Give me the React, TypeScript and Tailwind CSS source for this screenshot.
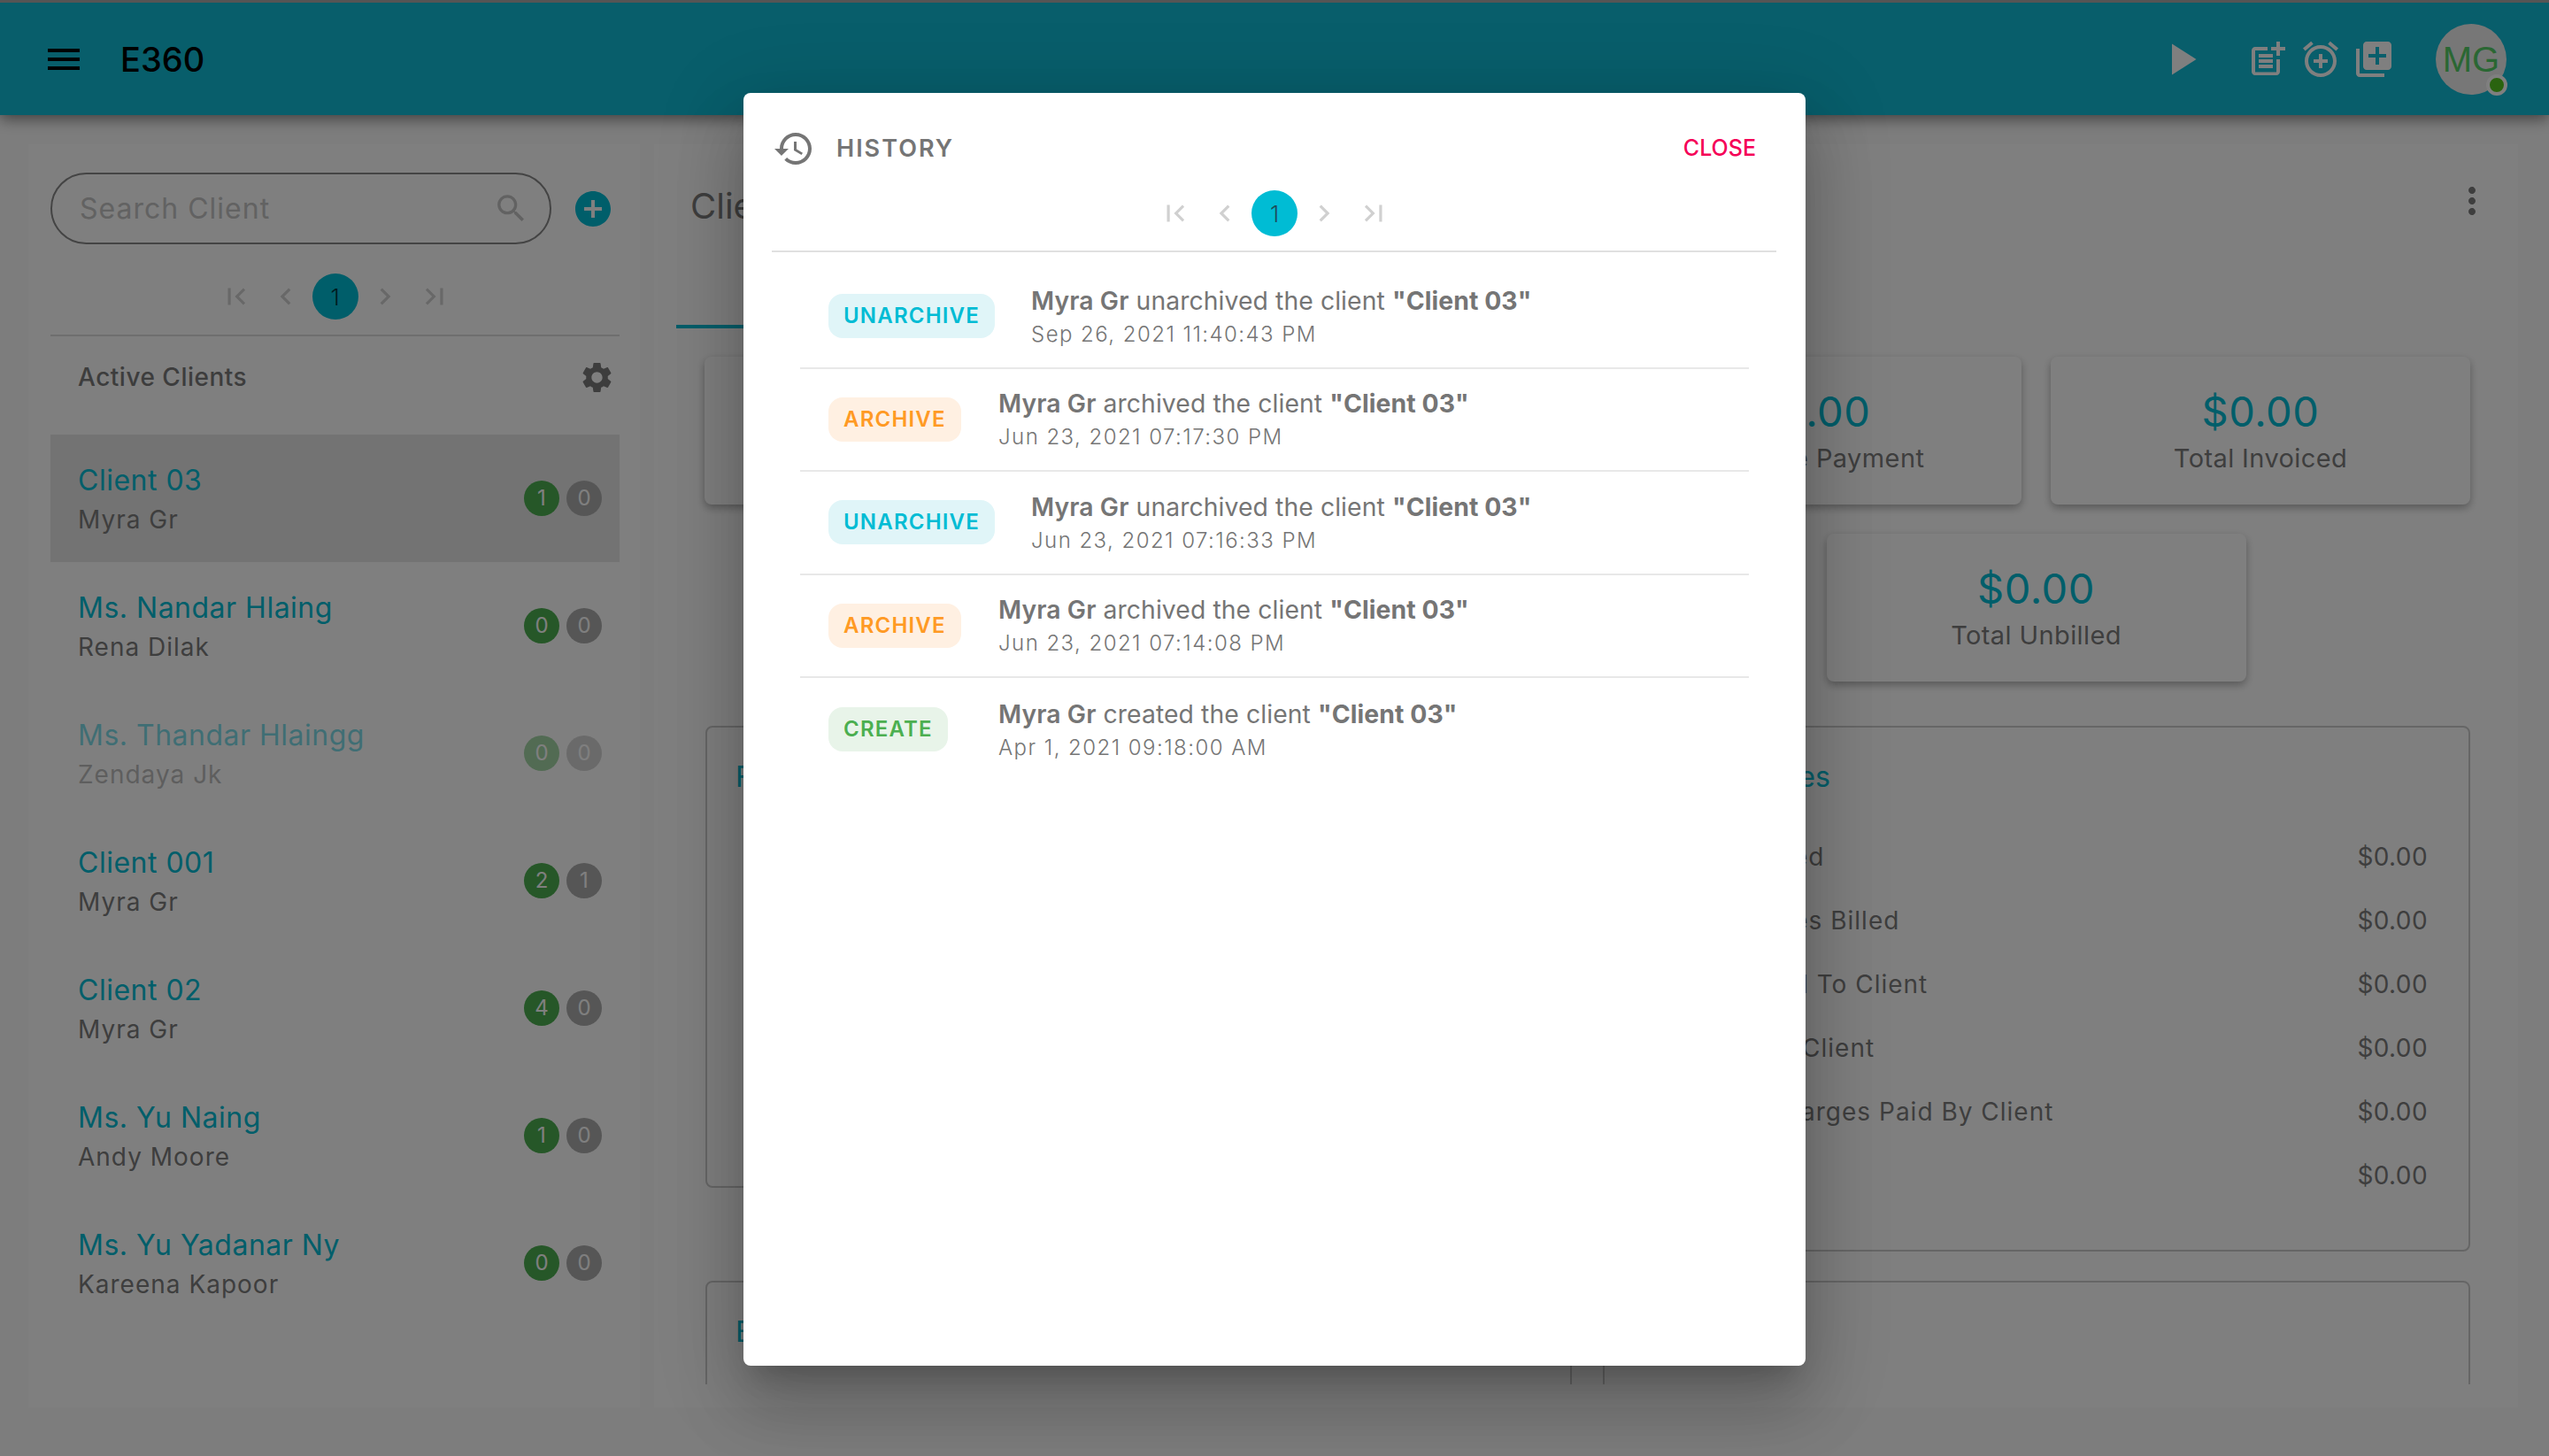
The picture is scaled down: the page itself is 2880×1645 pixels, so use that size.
const FONT = "font-['Inter','Liberation_Sans',sans-serif]";

const P = {
  menu: "M3 18h18v-2H3v2zm0-5h18v-2H3v2zm0-7v2h18V6H3z",
  play: "M8 5v14l11-7z",
  postAdd: "M17 19.22H5V7h7V5H5c-1.1 0-2 .9-2 2v12c0 1.1.9 2 2 2h12c1.1 0 2-.9 2-2v-7h-2v7.22z M19 2h-2v3h-3c.01.01 0 2 0 2h3v2.99c.01.01 2 0 2 0V7h3V5h-3V2z M7 9h8v2H7z M7 12v2h8v-2h-3z M7 15h8v2H7z",
  alarm: "M7.88 3.39L6.6 1.86 2 5.71l1.29 1.53 4.59-3.85zM22 5.72l-4.6-3.86-1.29 1.53 4.6 3.86L22 5.72zM12 4c-4.97 0-9 4.03-9 9s4.02 9 9 9c4.97 0 9-4.03 9-9s-4.03-9-9-9zm0 16c-3.87 0-7-3.13-7-7s3.13-7 7-7 7 3.13 7 7-3.13 7-7 7zm1-11h-2v3H8v2h3v3h2v-3h3v-2h-3V9z",
  library: "M4 6H2v14c0 1.1.9 2 2 2h14v-2H4V6zm16-4H8c-1.1 0-2 .9-2 2v12c0 1.1.9 2 2 2h12c1.1 0 2-.9 2-2V4c0-1.1-.9-2-2-2zm-1 9h-4v4h-2v-4H9V9h4V5h2v4h4v2z",
  search: "M15.5 14h-.79l-.28-.27C15.41 12.59 16 11.11 16 9.5 16 5.91 13.09 3 9.5 3S3 5.91 3 9.5 5.91 16 9.5 16c1.61 0 3.09-.59 4.23-1.57l.27.28v.79l5 4.99L20.49 19l-4.99-5zm-6 0C7.01 14 5 11.99 5 9.5S7.01 5 9.5 5 14 7.01 14 9.5 11.99 14 9.5 14z",
  addCircle: "M12 2C6.48 2 2 6.48 2 12s4.48 10 10 10 10-4.48 10-10S17.52 2 12 2zm5 11h-4v4h-2v-4H7v-2h4V7h2v4h4v2z",
  first: "M18.41 16.59L13.82 12l4.59-4.59L17 6l-6 6 6 6zM6 6h2v12H6z",
  prev: "M15.41 7.41L14 6l-6 6 6 6 1.41-1.41L10.83 12z",
  next: "M10 6L8.59 7.41 13.17 12l-4.58 4.59L10 18l6-6z",
  last: "M5.59 7.41L10.18 12l-4.59 4.59L7 18l6-6-6-6zM16 6h2v12h-2z",
  settings: "M19.14 12.94c.04-.3.06-.61.06-.94 0-.32-.02-.64-.07-.94l2.03-1.58c.18-.14.23-.41.12-.61l-1.92-3.32c-.12-.22-.37-.29-.59-.22l-2.39.96c-.5-.38-1.03-.7-1.62-.94l-.36-2.54c-.04-.24-.24-.41-.48-.41h-3.84c-.24 0-.43.17-.47.41l-.36 2.54c-.59.24-1.13.57-1.62.94l-2.39-.96c-.22-.08-.47 0-.59.22L2.74 8.87c-.12.21-.08.47.12.61l2.03 1.58c-.05.3-.09.63-.09.94s.02.64.07.94l-2.03 1.58c-.18.14-.23.41-.12.61l1.92 3.32c.12.22.37.29.59.22l2.39-.96c.5.38 1.03.7 1.62.94l.36 2.54c.05.24.24.41.48.41h3.84c.24 0 .44-.17.47-.41l.36-2.54c.59-.24 1.13-.56 1.62-.94l2.39.96c.22.08.47 0 .59-.22l1.92-3.32c.12-.22.07-.47-.12-.61l-2.01-1.58zM12 15.6c-1.98 0-3.6-1.62-3.6-3.6s1.62-3.6 3.6-3.6 3.6 1.62 3.6 3.6-1.62 3.6-3.6 3.6z",
  more: "M12 8c1.1 0 2-.9 2-2s-.9-2-2-2-2 .9-2 2 .9 2 2 2zm0 2c-1.1 0-2 .9-2 2s.9 2 2 2 2-.9 2-2-.9-2-2-2zm0 6c-1.1 0-2 .9-2 2s.9 2 2 2 2-.9 2-2-.9-2-2-2z",
  history: "M13 3c-4.97 0-9 4.03-9 9H1l3.89 3.89.07.14L9 12H6c0-3.87 3.13-7 7-7s7 3.13 7 7-3.13 7-7 7c-1.93 0-3.68-.79-4.94-2.06l-1.42 1.42C8.27 19.99 10.51 21 13 21c4.97 0 9-4.03 9-9s-4.03-9-9-9zm-1 5v5l4.28 2.54.72-1.21-3.5-2.08V8H12z",
};

function Icon({ d, className }: { d: string; className: string }) {
  return (
    <svg viewBox="0 0 24 24" fill="currentColor" className={className}>
      <path d={d} />
    </svg>
  );
}

function Pager({ textColor }: { textColor: string }) {
  const icon = "w-[38px] h-[38px] text-[#d0d0d0]";
  const cell = "w-[52px] h-[52px] flex items-center justify-center";
  return (
    <div className="flex justify-center gap-[4px]">
      <div className={cell}><Icon d={P.first} className={icon} /></div>
      <div className={cell}><Icon d={P.prev} className={icon} /></div>
      <div className={`${cell} rounded-full bg-[#00bcd4] text-[26px] font-light ${textColor}`}>1</div>
      <div className={cell}><Icon d={P.next} className={icon} /></div>
      <div className={cell}><Icon d={P.last} className={icon} /></div>
    </div>
  );
}

const clients = [
  { name: "Client 03", sub: "Myra Gr", a: 1, b: 0, selected: true },
  { name: "Ms. Nandar Hlaing", sub: "Rena Dilak", a: 0, b: 0 },
  { name: "Ms. Thandar Hlaingg", sub: "Zendaya Jk", a: 0, b: 0, faded: true },
  { name: "Client 001", sub: "Myra Gr", a: 2, b: 1 },
  { name: "Client 02", sub: "Myra Gr", a: 4, b: 0 },
  { name: "Ms. Yu Naing", sub: "Andy Moore", a: 1, b: 0 },
  { name: "Ms. Yu Yadanar Ny", sub: "Kareena Kapoor", a: 0, b: 0 },
];

function ClientRow({ c }: { c: (typeof clients)[number] }) {
  return (
    <div className={`flex items-center justify-between h-[144px] pl-[31px] pr-[20px] ${c.selected ? "bg-[#e6e6e6]" : ""} ${c.faded ? "opacity-50" : ""}`}>
      <div className="flex flex-col pt-[3px]">
        <div className="text-[32px] leading-[44px] tracking-[0.5px] text-[#00bcd4] font-normal">{c.name}</div>
        <div className="text-[28px] leading-[44px] tracking-[1px] text-[#7d7d7d]">{c.sub}</div>
      </div>
      <div className="flex gap-[8px]">
        <div className="w-[40px] h-[40px] rounded-full bg-[#4caf50] text-white text-[24px] flex items-center justify-center">{c.a}</div>
        <div className="w-[40px] h-[40px] rounded-full bg-[#adadad] text-white text-[24px] flex items-center justify-center">{c.b}</div>
      </div>
    </div>
  );
}

function StatCard({ value, label }: { value?: string; label?: string }) {
  return (
    <div className="w-[474px] h-[167px] rounded-[8px] bg-white shadow-[0_4px_10px_rgba(0,0,0,0.3)] flex flex-col items-center pt-[31px]">
      {value && <div className="text-[47px] leading-[62px] text-[#00bcd4] tracking-[0.5px]">{value}</div>}
      {label && <div className="text-[29px] leading-[44px] text-[#7d7d7d] tracking-[0.4px]">{label}</div>}
    </div>
  );
}

const charges = [
  "Total Fee Billed",
  "Total Expenses Billed",
  "Total Charged To Client",
  "Fees Paid By Client",
  "Additional Charges Paid By Client",
  "",
];

const history = [
  { tag: "UNARCHIVE", kind: "cyan", verb: "unarchived", date: "Sep 26, 2021 11:40:43 PM" },
  { tag: "ARCHIVE", kind: "orange", verb: "archived", date: "Jun 23, 2021 07:17:30 PM" },
  { tag: "UNARCHIVE", kind: "cyan", verb: "unarchived", date: "Jun 23, 2021 07:16:33 PM" },
  { tag: "ARCHIVE", kind: "orange", verb: "archived", date: "Jun 23, 2021 07:14:08 PM" },
  { tag: "CREATE", kind: "green", verb: "created", date: "Apr 1, 2021 09:18:00 AM" },
];

const tagClass: Record<string, string> = {
  cyan: "bg-[#e0f5f8] text-[#00bcd4]",
  orange: "bg-[#fff0e2] text-[#ff9a24]",
  green: "bg-[#e8f4e9] text-[#4caf50]",
};

function HistoryRow({ h, last }: { h: (typeof history)[number]; last: boolean }) {
  return (
    <div className={`flex items-center h-[116.5px] pl-[32px] ${last ? "" : "border-b-2 border-[#e8e8e8]"}`}>
      <div className="min-w-[151px]">
        <div className={`inline-flex h-[50px] items-center px-[17px] rounded-[16px] text-[24px] font-semibold tracking-[1.2px] ${tagClass[h.kind]}`}>{h.tag}</div>
      </div>
      <div className="flex flex-col ml-[41px] pt-[3px] text-[#757575]">
        <div className="text-[28.3px] leading-[38px] tracking-[0.1px]">
          <span className="font-semibold">Myra Gr</span> {h.verb} the client <span className="font-bold">"Client 03"</span>
        </div>
        <div className="text-[24px] leading-[38px] tracking-[1.45px] font-light">{h.date}</div>
      </div>
    </div>
  );
}

export default function App() {
  return (
    <div className={`relative w-[2880px] h-[1645px] overflow-hidden bg-[#fbfbfb] ${FONT}`}>
      <header className="h-[130px] border-t-[3px] border-[#aaaaaa] bg-[#10bcd6] flex items-center pl-[48px] pr-[48px] shadow-[0_4px_16px_rgba(0,0,0,0.5)]">
        <Icon d={P.menu} className="w-[48px] h-[48px] text-black" />
        <div className="ml-[40px] text-[38px] font-medium text-black leading-none">E360</div>
        <div className="flex-1" />
        <Icon d={P.play} className="w-[60px] h-[60px] text-white mr-[44px]" />
        <div className="flex gap-[12px]">
          <Icon d={P.postAdd} className="w-[48px] h-[48px] text-white" />
          <Icon d={P.alarm} className="w-[48px] h-[48px] text-white" />
          <Icon d={P.library} className="w-[48px] h-[48px] text-white" />
        </div>
        <div className="relative ml-[46px] w-[80px] h-[80px] rounded-full bg-[#eeeeee] flex items-center justify-center font-['Liberation_Sans'] text-[40px] text-[#55cf66]">
          MG
          <span className="absolute right-[-1px] bottom-[-1px] w-[16px] h-[16px] rounded-full bg-[#55c71f] border-[4px] border-white box-content"></span>
        </div>
      </header>

      <div className="flex pt-[33px] pl-[32px] gap-[16px]">
        <aside className="w-[691px] h-[1427px] bg-white pl-[25px] pr-[23px] pt-[32px] shrink-0">
          <div className="flex items-center">
            <div className="w-[566px] h-[81px] rounded-full border-2 border-[#888888] flex items-center pl-[31px] pr-[23px]">
              <span className="flex-1 text-[32px] tracking-[1px] text-[#c4c4c4]">Search Client</span>
              <Icon d={P.search} className="w-[41px] h-[41px] text-[#c4c4c4]" />
            </div>
            <Icon d={P.addCircle} className="ml-[23px] w-[48px] h-[48px] text-[#00bcd4]" />
          </div>
          <div className="mt-[33px]"><Pager textColor="text-[#003840]" /></div>
          <div className="mt-[17px] h-[2px] bg-[#dddddd]" />
          <div className="flex items-center justify-between h-[92px] pl-[31px] pr-[5px] mb-[19px]">
            <span className="text-[28px] font-medium tracking-[0.5px] text-[#7a7a7a]">Active Clients</span>
            <Icon d={P.settings} className="w-[41px] h-[41px] text-[#7a7a7a]" />
          </div>
          {clients.map((c) => <ClientRow key={c.name} c={c} />)}
        </aside>

        <main className="w-[2106px] h-[1427px] bg-white">
          <div className="flex justify-between items-start pt-[40px] pl-[41px] pr-[28px]">
            <div className="mt-[6px] text-[40px] leading-[48px] text-[#7d7d7d]">Client 03</div>
            <Icon d={P.more} className="w-[48px] h-[48px] text-[#7d7d7d]" />
          </div>
          <div className="ml-[25px] w-[300px] h-[114px] border-b-4 border-[#00bcd4]" />
          <div className="ml-[57px] w-[1995px] mt-[32px] flex flex-wrap justify-center gap-[33px]">
            <StatCard />
            <StatCard />
            <StatCard value="$0.00" label="Advance Payment" />
            <StatCard value="$0.00" label="Total Invoiced" />
            <StatCard />
            <StatCard />
            <StatCard value="$0.00" label="Total Unbilled" />
          </div>
          <div className="ml-[58px] mt-[50px] h-[744px] overflow-hidden grid grid-cols-[979px_980px] gap-x-[35px] gap-y-[33px] content-start">
            <div className="h-[594px]">
              <div className="h-[522px] border-2 border-[#cccccc] rounded-[8px] px-[32px] pt-[34px] text-[32px] leading-[44px] text-[#00bcd4]">F</div>
            </div>
            <div className="h-[594px] border-2 border-[#cccccc] rounded-[8px] pl-[32px] pr-[46px] pt-[34px]">
              <div className="text-[32px] leading-[44px] text-[#00bcd4]">Client Charges</div>
              <div className="mt-[32px]">
                {charges.map((label, i) => (
                  <div key={i} className="h-[72px] flex items-center justify-between text-[28px] tracking-[1px] text-[#7d7d7d]">
                    <span>{label}</span>
                    <span className="tracking-[0.4px]">$0.00</span>
                  </div>
                ))}
              </div>
            </div>
            <div className="h-[300px] border-2 border-[#cccccc] rounded-[8px] px-[32px] pt-[34px] text-[32px] leading-[44px] text-[#00bcd4]">E</div>
            <div className="h-[300px] border-2 border-[#cccccc] rounded-[8px]" />
          </div>
        </main>
      </div>

      <div className="absolute inset-0 bg-black/50 flex justify-center items-start pt-[105px]">
        <div className="w-[1200px] h-[1438px] bg-white rounded-[8px] shadow-[0_22px_30px_-14px_rgba(0,0,0,0.2),0_48px_76px_6px_rgba(0,0,0,0.14),0_18px_92px_16px_rgba(0,0,0,0.12)]">
          <div className="flex items-center pt-[39px] pl-[33px] pr-[56px]">
            <Icon d={P.history} className="w-[48px] h-[48px] text-[#757575]" />
            <div className="ml-[24px] flex-1 text-[27px] font-semibold tracking-[2px] text-[#757575]">HISTORY</div>
            <div className="text-[25px] font-medium text-[#f50057]">CLOSE</div>
          </div>
          <div className="mt-[23px]"><Pager textColor="text-[#1d4d57]" /></div>
          <div className="mt-[16px] ml-[32px] mr-[33px] h-[2px] bg-[#e0e0e0]" />
          <div className="mt-[15px] mx-[64px]">
            {history.map((h, i) => <HistoryRow key={h.date} h={h} last={i === history.length - 1} />)}
          </div>
        </div>
      </div>
    </div>
  );
}
